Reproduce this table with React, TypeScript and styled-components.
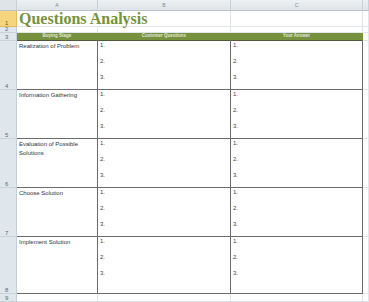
import React from 'react'
import styled, { createGlobalStyle } from 'styled-components'

const GlobalStyle = createGlobalStyle`
   html, body {
      margin: 0;
      padding: 0;
      background: #ffffff;
   }
   body {
      font-family: "Liberation Sans", Arial, sans-serif;
   }
`

const rows = [
   { stage: 'Realization of Problem', height: 49 },
   { stage: 'Information Gathering', height: 49 },
   { stage: 'Evaluation of  Possible Solutions', height: 49 },
   { stage: 'Choose Solution', height: 49 },
   { stage: 'Implement Solution', height: 57 },
]

const Sheet = styled.div`
   width: 369px;
   height: 302px;
   overflow: hidden;
   display: grid;
   grid-template-columns: 17px 81px 133px 132px 1fr;
   grid-template-rows: 11px 16px 6px 8px ${rows.map(r => r.height + 'px').join(' ')} 1fr;
   background: #ffffff;
`

const Cell = styled.div`
   box-sizing: border-box;
   border-right: 1px solid #dfe5ea;
   border-bottom: 1px solid #dfe5ea;
   min-width: 0;
   overflow: hidden;
`

const ColHead = styled(Cell)`
   background: linear-gradient(#eef1f3, #dfe4e8);
   border-right: 1px solid #c9d1d8;
   border-bottom: 1px solid #b9c3cc;
   display: flex;
   align-items: center;
   justify-content: center;
   font-size: 5px;
   color: #7d8894;
   line-height: 1;
`

const Corner = styled(ColHead)`
   background: #dfe4e8;
`

const RowHead = styled(Cell)<{ $selected?: boolean }>`
   background: ${p => (p.$selected ? '#f6d57f' : '#dfe6ec')};
   border-right: 1px solid ${p => (p.$selected ? '#e2b95a' : '#c3ced8')};
   border-bottom: 1px solid ${p => (p.$selected ? '#e2b95a' : '#c9d3dc')};
   display: flex;
   align-items: flex-end;
   padding: 0 0 0 5px;
   font-size: 6px;
   line-height: 5px;
   color: ${p => (p.$selected ? '#6a5420' : '#5d6a78')};
`

const TitleCell = styled(Cell)`
   grid-column: 2 / 4;
   padding-left: 2px;
   display: flex;
   align-items: center;
   font-family: "Liberation Serif", "Times New Roman", serif;
   font-weight: bold;
   font-size: 16px;
   line-height: 16px;
   color: #76923c;
   white-space: nowrap;
   overflow: visible;
`

const HeadCell = styled(Cell)`
   background: #76923c;
   border-right: 1px solid #76923c;
   border-bottom: 1px solid #4f5a3a;
   display: flex;
   align-items: center;
   justify-content: center;
   font-size: 4.5px;
   font-weight: bold;
   color: #e4e7d6;
   line-height: 1;
`

const DataCell = styled(Cell)`
   border-right: 1px solid #6b6b6b;
   border-bottom: 1px solid #6b6b6b;
   padding: 1px 2px 0 2px;
   font-size: 6px;
   color: #333333;
`

const StageText = styled.div`
   line-height: 8.5px;
   padding-right: 4px;
`

const NumberList = styled.ol`
   list-style: none;
   margin: 0;
   padding: 0;
   display: flex;
   flex-direction: column;
   gap: 9px;
`

const NumberItem = styled.li`
   line-height: 7px;
   color: #444444;
`

const Numbers = () => (
   <NumberList>
      {[1, 2, 3].map(n => (
         <NumberItem key={n}>{n}.</NumberItem>
      ))}
   </NumberList>
)

export default function App() {
   return (
      <>
         <GlobalStyle />
         <Sheet>
            <Corner />
            <ColHead>A</ColHead>
            <ColHead>B</ColHead>
            <ColHead>C</ColHead>
            <ColHead />

            <RowHead $selected>1</RowHead>
            <TitleCell>Questions Analysis</TitleCell>
            <Cell />
            <Cell />

            <RowHead>2</RowHead>
            <Cell />
            <Cell />
            <Cell />
            <Cell />

            <RowHead>3</RowHead>
            <HeadCell>Buying Stage</HeadCell>
            <HeadCell>Customer Questions</HeadCell>
            <HeadCell>Your Answer</HeadCell>
            <Cell />

            {rows.map((row, i) => (
               <React.Fragment key={row.stage}>
                  <RowHead>{i + 4}</RowHead>
                  <DataCell>
                     <StageText>{row.stage}</StageText>
                  </DataCell>
                  <DataCell>
                     <Numbers />
                  </DataCell>
                  <DataCell>
                     <Numbers />
                  </DataCell>
                  <Cell />
               </React.Fragment>
            ))}

            <RowHead>9</RowHead>
            <Cell />
            <Cell />
            <Cell />
            <Cell />
         </Sheet>
      </>
   )
}
